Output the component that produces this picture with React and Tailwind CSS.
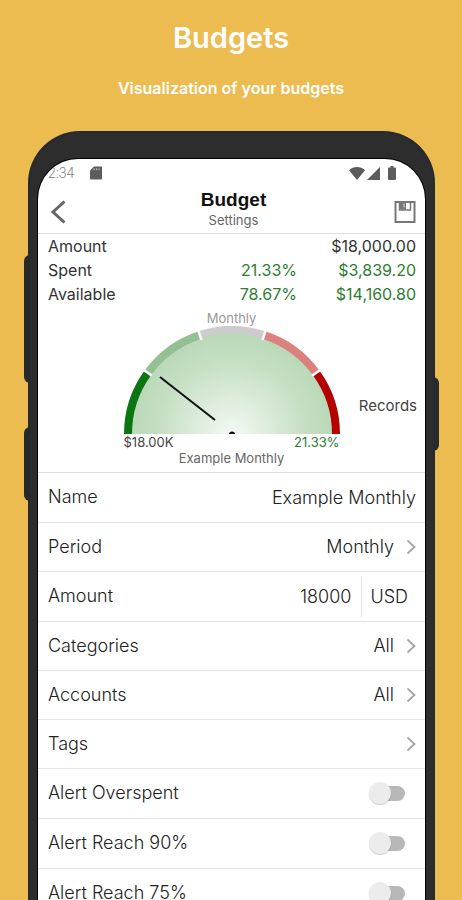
import React, { useState } from "react";

const summary = [
  { label: "Amount", percent: "", value: "$18,000.00", color: "text-[#333333]" },
  { label: "Spent", percent: "21.33%", value: "$3,839.20", color: "text-[#2e7d32]" },
  { label: "Available", percent: "78.67%", value: "$14,160.80", color: "text-[#2e7d32]" },
];

const alerts = ["Alert Overspent", "Alert Reach 90%", "Alert Reach 75%"];

const segments = ["#0b7512", "#93c193", "#cccccc", "#dc8080", "#b50000"];

// point on the gauge, angle measured clockwise from the left end
const point = (radius, degrees) => {
  const a = (degrees * Math.PI) / 180;
  return `${108 - radius * Math.cos(a)} ${108 - radius * Math.sin(a)}`;
};

const StatusBar = () => (
  <div className="flex h-7 items-center pl-2.5 pr-[29px] text-[#5c5c5c]">
    <span className="font-[Roboto] text-sm text-[#808080]">2:34</span>
    <svg viewBox="0 0 12 14" className="ml-4 h-3.5 w-3" fill="currentColor">
      <path d="M4 0.5h7a1 1 0 0 1 1 1v11a1 1 0 0 1-1 1H1a1 1 0 0 1-1-1V4.5z" />
      <path d="M4 2.2v2M6.500 2.200v2M9 2.200v2" stroke="#b0b0b0" strokeWidth="1.200" />
    </svg>
    <div className="ml-auto flex items-center gap-0.5">
      <svg viewBox="0 0 16 13" className="h-[13px] w-4" fill="currentColor">
        <path d="M8 13 0 3.200C2.200 1.200 5 0 8 0s5.800 1.200 8 3.200z" />
      </svg>
      <svg viewBox="0 0 13 13" className="h-[13px] w-[13px]" fill="currentColor">
        <path d="M13 0v13H0z" />
      </svg>
      <svg viewBox="0 0 8 14" className="ml-1.5 h-3.5 w-2" fill="currentColor">
        <path d="M2.500 0h3v1.500H7a1 1 0 0 1 1 1V13a1 1 0 0 1-1 1H1a1 1 0 0 1-1-1V2.500a1 1 0 0 1 1-1h1.500z" />
      </svg>
    </div>
  </div>
);

const Chevron = () => (
  <svg
    viewBox="0 0 10 16"
    className="h-4 w-2.5 shrink-0"
    fill="none"
    stroke="#a6a6a6"
    strokeWidth="1.800"
  >
    <path d="M1.500 1.500 8.500 8l-7 6.500" />
  </svg>
);

const Gauge = () => (
  <figure className="flex w-[216px] flex-col items-center text-[13px] leading-4">
    <span className="text-[#999999]">Monthly</span>
    <svg viewBox="0 0 216 108" className="h-[108px] w-[216px]">
      <defs>
        <radialGradient id="dial" gradientUnits="userSpaceOnUse" cx="108" cy="108" r="104">
          <stop offset="0" stopColor="#f4f9f4" />
          <stop offset="0.3" stopColor="#e0eede" />
          <stop offset="0.7" stopColor="#c6dfc4" />
          <stop offset="1" stopColor="#b9d8b7" />
        </radialGradient>
      </defs>
      <path d="M6 108a102 102 0 0 1 204 0z" fill="url(#dial)" />
      {segments.map((color, i) => (
        <path
          key={color}
          d={`M${point(104, i * 36)}A104 104 0 0 1 ${point(104, i * 36 + 36)}`}
          fill="none"
          stroke={color}
          strokeWidth="8"
        />
      ))}
      {[36, 72, 108, 144].map((deg) => (
        <path
          key={deg}
          d={`M${point(99, deg)}L${point(109, deg)}`}
          stroke="#ffffff"
          strokeWidth="2.500"
        />
      ))}
      <path d="M36 51 91 94" stroke="#111111" strokeWidth="2" />
      <path d="M105 108a3 2.500 0 0 1 6 0z" fill="#111111" />
    </svg>
    <div className="flex w-full justify-between text-[#444444]">
      <span>$18.00K</span>
      <span className="text-[#2e7d32]">21.33%</span>
    </div>
    <figcaption className="text-[#666666]">Example Monthly</figcaption>
  </figure>
);

const PickerRow = ({ label, value }) => (
  <button
    type="button"
    className="flex h-[49px] w-full items-center border-b border-[#e4e4e4] pl-2.5 pr-[9px] text-left"
  >
    <span className="flex-1">{label}</span>
    <span className="mr-3">{value}</span>
    <Chevron />
  </button>
);

const AlertRow = ({ label }) => {
  const [on, setOn] = useState(false);

  return (
    <label className="flex h-[50px] items-center justify-between border-b border-[#e4e4e4] pl-2.5 pr-5">
      <span className="pb-0.5">{label}</span>
      <input
        type="checkbox"
        checked={on}
        onChange={(e) => setOn(e.target.checked)}
        className="relative h-[15px] w-8 appearance-none rounded-full bg-[#b8b8b8] before:absolute before:-left-1 before:-top-1 before:h-[22px] before:w-[22px] before:rounded-full before:bg-[#ececec] before:shadow-[0_1px_1px_rgba(0,0,0,0.2)] checked:bg-[#93c193] checked:before:left-4"
      />
    </label>
  );
};

const App = () => {
  const [name, setName] = useState("Example Monthly");
  const [amount, setAmount] = useState("18000");

  return (
    <div className="flex h-screen flex-col overflow-hidden bg-[#edbc50] font-[Inter,sans-serif]">
      <header className="pb-[31px] pt-5 text-center text-white">
        <h1 className="text-[29px] font-semibold leading-9">Budgets</h1>
        <p className="mt-5 text-base font-semibold leading-6">Visualization of your budgets</p>
      </header>

      {/* PHONE */}
      <div className="relative ml-7 mr-[27px] min-h-0 flex-1">
        {/* SIDE KEYS */}
        <div className="absolute -left-1 top-[124px] h-32 w-3 rounded-md bg-[#262a2d]" />
        <div className="absolute -left-1 top-[296px] h-[74px] w-3 rounded-md bg-[#262a2d]" />
        <div className="absolute -right-1 top-[246px] h-[74px] w-3 rounded-md bg-[#262a2d]" />

        <div className="relative h-full rounded-t-[52px] border-x-2 border-t-2 border-[#252a2d] bg-[#2d2d2d] px-2 pt-[26px]">
          <main className="h-full overflow-hidden rounded-t-[40px] bg-white text-lg font-light text-[#222222] shadow-[0_0_0_1px_#000000]">
            <StatusBar />

            {/* TITLE BAR */}
            <div className="flex h-[47px] items-center justify-between border-b border-[#dddddd] pl-3 pr-2 pt-1">
              <button type="button" aria-label="Back" className="w-6">
                <svg viewBox="0 0 16 24" className="h-6 w-4" fill="none" stroke="#666666" strokeWidth="3">
                  <path d="M14.500 1.500 3 12l11.500 10.500" />
                </svg>
              </button>
              <div className="pb-2 text-center">
                <h2 className="font-['Liberation_Sans',sans-serif] text-[19px] font-bold leading-6 text-[#111111]">
                  Budget
                </h2>
                <p className="text-[13px] font-normal leading-4 text-[#666666]">Settings</p>
              </div>
              <button type="button" aria-label="Save" className="w-6">
                <svg viewBox="0 0 24 24" className="h-6 w-6" fill="none" stroke="#777777" strokeWidth="2">
                  <path d="M2.500 2h19v20h-19z" />
                  <path d="M6.500 2v8h11V2" strokeWidth="1.500" />
                  <path d="M7 2h6v7.500H7z" fill="#777777" stroke="none" />
                  <path d="M11 3.500v4" stroke="#dddddd" strokeWidth="1" />
                </svg>
              </button>
            </div>

            {/* SUMMARY */}
            <table className="w-full text-base font-normal leading-6">
              <tbody>
                {summary.map((row) => (
                  <tr key={row.label}>
                    <th scope="row" className="pl-2.5 text-left font-normal text-[#333333]">
                      {row.label}
                    </th>
                    <td className={`text-right ${row.color}`}>{row.percent}</td>
                    <td className={`w-32 pr-[9px] text-right ${row.color}`}>{row.value}</td>
                  </tr>
                ))}
              </tbody>
            </table>

            {/* GAUGE */}
            <div className="grid grid-cols-[1fr_auto_1fr] items-center border-b border-[#dddddd] pb-1.5 pt-1 font-normal">
              <span />
              <Gauge />
              <button type="button" className="mt-9 pr-2 text-right text-[15px] text-[#444444]">
                Records
              </button>
            </div>

            {/* FIELDS */}
            <div className="flex h-[50px] items-center justify-between border-b border-[#e4e4e4] pl-2.5 pr-[9px]">
              <label htmlFor="name" className="pb-0.5">
                Name
              </label>
              <input
                id="name"
                type="text"
                value={name}
                onChange={(e) => setName(e.target.value)}
                className="w-48 text-right outline-none"
              />
            </div>
            <PickerRow label="Period" value="Monthly" />
            <div className="flex h-[50px] items-center border-b border-[#e4e4e4] pl-2.5 pr-[17px]">
              <label htmlFor="amount" className="flex-1 pb-0.5">
                Amount
              </label>
              <input
                id="amount"
                type="text"
                inputMode="decimal"
                value={amount}
                onChange={(e) => setAmount(e.target.value)}
                className="w-32 pr-2.5 text-right outline-none"
              />
              <button type="button" className="h-10 border-l border-[#e4e4e4] pl-2">
                USD
              </button>
            </div>
            <PickerRow label="Categories" value="All" />
            <PickerRow label="Accounts" value="All" />
            <PickerRow label="Tags" value="" />
            {alerts.map((label) => (
              <AlertRow key={label} label={label} />
            ))}
          </main>
        </div>
      </div>
    </div>
  );
};

export default App;
